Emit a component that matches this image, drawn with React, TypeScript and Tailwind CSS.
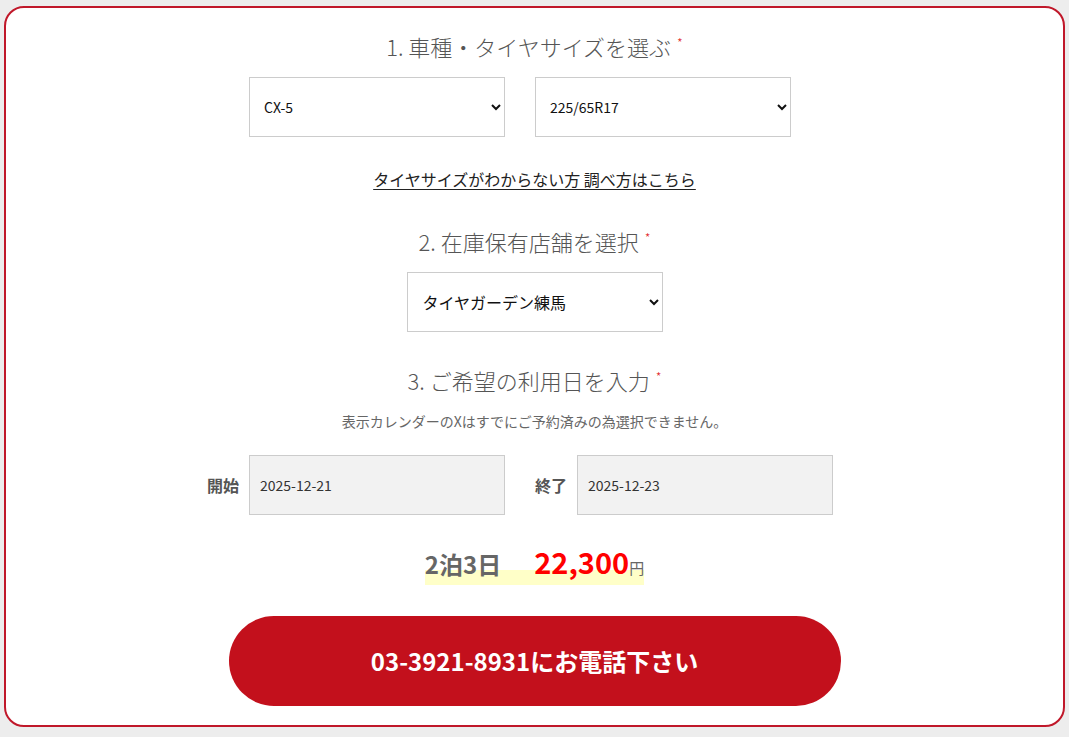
import React from "react";

const font = { fontFamily: '"Noto Sans CJK JP", "Noto Sans", sans-serif' };

function Heading({ children }: { children: React.ReactNode }) {
  return (
    <h2 className="flex h-[30px] items-center justify-center text-[22px] font-light leading-[30px] text-[#555]">
      <span>{children}</span>
      <span className="ml-[6px] -mt-[8px] text-[13px] leading-none text-[#e02020]">*</span>
    </h2>
  );
}

function Select({ value, big }: { value: string; big?: boolean }) {
  return (
    <select
      defaultValue={value}
      className={
        big
          ? "h-[60px] w-[256px] border border-[#cccccc] bg-white pl-[11px] pr-[6px] text-[16px] text-[#111]"
          : "h-[60px] w-[256px] border border-[#cccccc] bg-white pl-[10px] pr-[6px] text-[14px] text-[#111]"
      }
      style={font}
    >
      <option value={value}>{value}</option>
    </select>
  );
}

function DateInput({ value }: { value: string }) {
  return (
    <input
      type="text"
      readOnly
      value={value}
      className="h-[60px] w-[256px] border border-[#cccccc] bg-[#f2f2f2] px-[10px] text-[14px] text-[#333] outline-none"
      style={font}
    />
  );
}

export default function App() {
  return (
    <div className="min-h-[737px] bg-[#ededed] px-[4px] pt-[6px]" style={font}>
      <div className="flex h-[721px] flex-col items-center rounded-[20px] border-2 border-[#c0182a] bg-white pt-[23px]">
        <Heading>1. 車種・タイヤサイズを選ぶ</Heading>
        <div className="mt-[16px] flex w-full justify-center gap-[30px] pr-[29px]">
          <Select value="CX-5" />
          <Select value="225/65R17" />
        </div>
        <a className="mt-[30px] block h-[24px] text-[16px] font-normal leading-[24px] text-[#222] underline underline-offset-[3px]">
          タイヤサイズがわからない方 調べ方はこちら
        </a>
        <div className="mt-[35px]">
          <Heading>2. 在庫保有店舗を選択</Heading>
        </div>
        <div className="mt-[16px] flex">
          <Select value="タイヤガーデン練馬" big />
        </div>
        <div className="mt-[33px]">
          <Heading>3. ご希望の利用日を入力</Heading>
        </div>
        <p className="mt-[16px] h-[20px] text-[14px] leading-[20px] text-[#666]">
          表示カレンダーのXはすでにご予約済みの為選択できません。
        </p>
        <div className="mt-[24px] flex h-[60px] w-full items-center justify-center pr-[29px]">
          <span className="mr-[10px] text-[16px] font-bold leading-none text-[#555]">開始</span>
          <DateInput value="2025-12-21" />
          <span className="ml-[30px] mr-[10px] text-[16px] font-bold leading-none text-[#555]">終了</span>
          <DateInput value="2025-12-23" />
        </div>
        <div className="mt-[31px] flex h-[40px] items-baseline bg-[linear-gradient(transparent_24px,#ffffc8_24px,#ffffc8_39px,transparent_39px)] pt-[1px]">
          <span className="text-[24px] font-bold leading-none text-[#666]">2泊3日</span>
          <span className="ml-[33px] text-[29px] font-bold leading-none text-[#ff0000]">22,300</span>
          <span className="text-[15px] leading-none text-[#666]">円</span>
        </div>
        <button className="mt-[30px] h-[90px] w-[612px] shrink-0 rounded-full bg-[#c3101c] text-[24px] font-bold text-white">
          03-3921-8931にお電話下さい
        </button>
      </div>
    </div>
  );
}
